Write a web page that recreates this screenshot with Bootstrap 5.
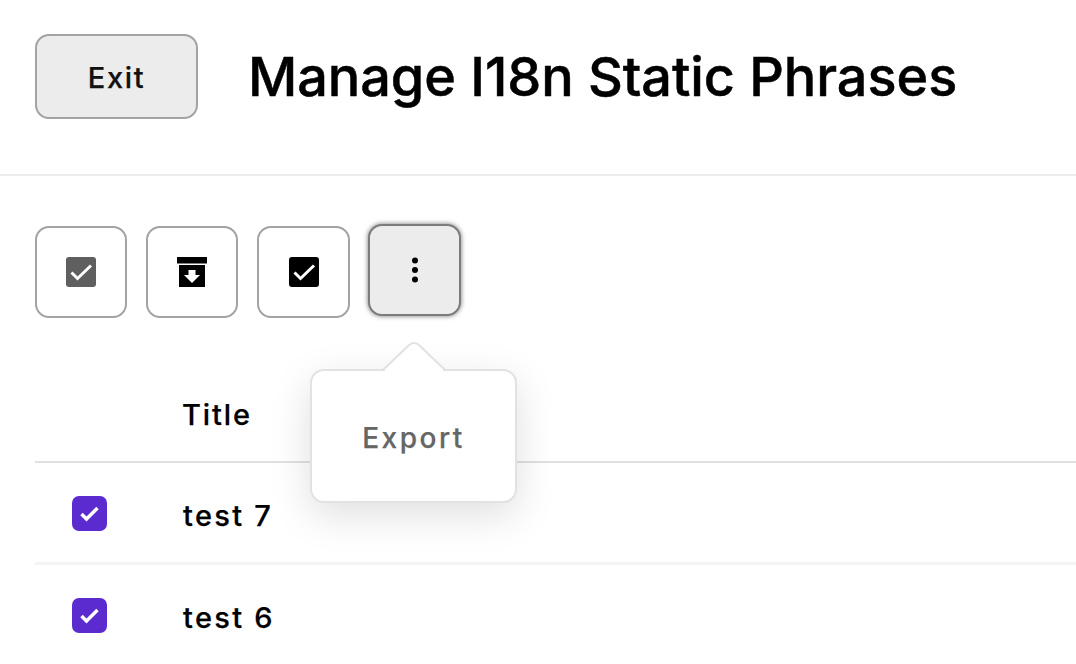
<!DOCTYPE html>
<html lang="en">
<head>
<meta charset="utf-8">
<title>Manage I18n Static Phrases</title>
<link href="https://cdn.jsdelivr.net/npm/bootstrap@5.3.0/dist/css/bootstrap.min.css" rel="stylesheet">
<style>
html,body{height:100%;overflow:hidden;background:#fff}
body{font-family:Inter,"Liberation Sans",sans-serif;color:#000;-webkit-font-smoothing:antialiased}
.page-head{height:176px;padding:34px 35px 0;border-bottom:2px solid #ececec;gap:50px}
.btn.exit-btn{width:163px;height:85px;background:#ececec;border:2px solid #a3a3a3;border-radius:14px;font-size:29px;font-weight:500;letter-spacing:1.7px;color:#111;padding:2px 0 0;-webkit-text-stroke:.25px #111}
.page-title{font-size:54px;font-weight:500;letter-spacing:-.06px;margin:0;line-height:85px;color:#000;-webkit-text-stroke:.5px #000}
.tool-row{padding:50px 35px 0;gap:19px;height:187px;position:relative}
.btn.tool-btn{width:92px;height:92px;background:#fff;border:2px solid #a3a3a3;border-radius:14px;padding:0;display:flex;align-items:center;justify-content:center}
.btn.tool-btn.wide-btn{width:93px;margin-right:-1px}
.btn.tool-btn.is-open{width:93px;background:#ececec;border-color:#7c7c7c;box-shadow:0 0 5px rgba(0,0,0,.55);margin-top:-2px}
.pop-box{position:absolute;left:310px;top:369px;width:207px;height:134px;background:#fff;border:2px solid #e2e2e2;border-radius:14px;box-shadow:0 12px 40px rgba(0,0,0,.13);display:flex;align-items:center;justify-content:center;font-size:28px;font-weight:500;letter-spacing:2.5px;color:#666;z-index:5;padding-top:4px;-webkit-text-stroke:.25px #666}
.pop-tip{position:absolute;left:69px;top:-30px;width:66px;height:30px}
.grid-wrap{padding:0 0 0 35px}
.grid-head{height:100px;border-bottom:2px solid #e0e0e0;font-size:29px;font-weight:500;letter-spacing:1.9px;padding-left:147px;padding-top:6px;align-items:center;-webkit-text-stroke:.25px #000}
.grid-row{height:102px;border-bottom:3px solid #f3f3f3;align-items:center;font-size:29px;font-weight:500;letter-spacing:2.3px;-webkit-text-stroke:.25px #000}
.row-text{padding-top:6px}
.tick-box{width:35px;height:35px;margin-left:37px;margin-right:76px;margin-top:2px;background:#5b2bd0;border-radius:7px;display:flex;align-items:center;justify-content:center}
</style>
</head>
<body>
<header class="page-head d-flex align-items-start">
  <button type="button" class="btn exit-btn">Exit</button>
  <h1 class="page-title">Manage I18n Static Phrases</h1>
</header>
<div class="tool-row d-flex align-items-start">
  <button type="button" class="btn tool-btn" aria-label="Select">
    <svg width="30" height="30" viewBox="0 0 30 30"><rect width="30" height="30" x="0" y="0" rx="3" fill="#5f5f5f"/><path d="M5.500 15.500l6 6L25 8.500" fill="none" stroke="#fff" stroke-width="3"/></svg>
  </button>
  <button type="button" class="btn tool-btn" aria-label="Archive">
    <svg width="30" height="30" viewBox="0 0 30 30"><rect x="0" y="0" width="30" height="6.500" fill="#000"/><rect x="2" y="8" width="26" height="22" fill="#000"/><path d="M11.500 13h7v5h4.500L15 26 7 18h4.500z" fill="#fff"/></svg>
  </button>
  <button type="button" class="btn tool-btn wide-btn" aria-label="Check">
    <svg width="30" height="30" viewBox="0 0 30 30"><rect width="30" height="30" rx="3" fill="#000"/><path d="M5.500 15.500l6 6L25 8.500" fill="none" stroke="#fff" stroke-width="3"/></svg>
  </button>
  <button type="button" class="btn tool-btn is-open" aria-label="More">
    <svg width="8" height="28" viewBox="0 0 8 28"><circle cx="4" cy="4.500" r="3" fill="#000"/><circle cx="4" cy="14" r="3" fill="#000"/><circle cx="4" cy="23.500" r="3" fill="#000"/></svg>
  </button>
</div>
<div class="pop-box">Export
  <svg class="pop-tip" viewBox="0 0 66 30"><path d="M2 29 L28 4 Q33 0 38 4 L64 29" fill="#fff" stroke="#e2e2e2" stroke-width="2"/><rect x="4" y="28" width="58" height="3" fill="#fff"/></svg>
</div>
<main class="grid-wrap">
  <div class="grid-head d-flex">Title</div>
  <div class="grid-row d-flex"><span class="tick-box"><svg width="21" height="17" viewBox="0 0 21 17"><path d="M2.500 9l5 5L18.500 3" fill="none" stroke="#fff" stroke-width="3.500"/></svg></span><span class="row-text">test 7</span></div>
  <div class="grid-row d-flex"><span class="tick-box"><svg width="21" height="17" viewBox="0 0 21 17"><path d="M2.500 9l5 5L18.500 3" fill="none" stroke="#fff" stroke-width="3.500"/></svg></span><span class="row-text">test 6</span></div>
</main>
<script src="https://cdn.jsdelivr.net/npm/bootstrap@5.3.0/dist/js/bootstrap.bundle.min.js"></script>
</body>
</html>
